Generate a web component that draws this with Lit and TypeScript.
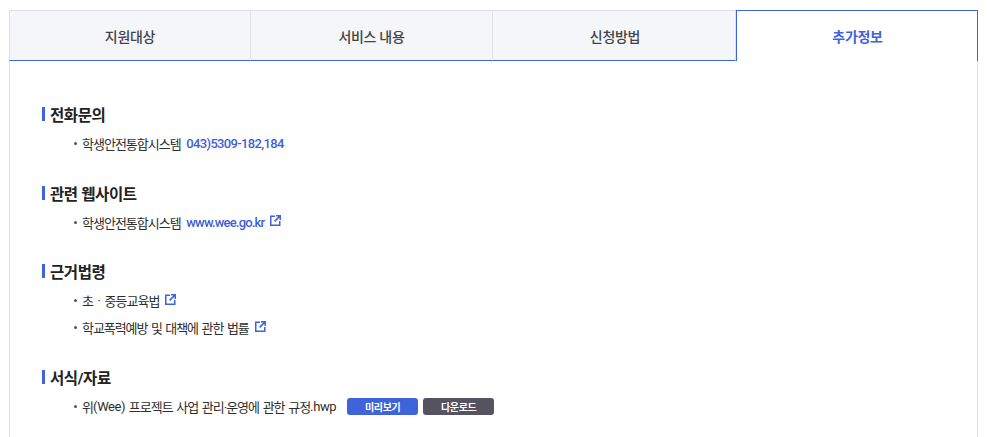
import { LitElement, html, css } from "lit";
import { customElement } from "lit/decorators.js";

const ext = html`<svg class="ext" width="11" height="11" viewBox="0 0 11 11" fill="none" aria-hidden="true">
  <path d="M5 1.25H.75V10.25H9.75V6" stroke="#3f63d9" stroke-width="1.5"/>
  <path d="M4.6 6.4 9.6 1.4M6 .75H10.25V5" stroke="#3f63d9" stroke-width="1.5"/>
</svg>`;

@customElement("app-root")
export class AppRoot extends LitElement {
  static styles = css`
    :host { display: block; height: 437px; overflow: hidden; background: #fff; font-family: Roboto, "Noto Sans CJK KR", sans-serif; color: #333; }
    .wrap { margin: 10px 10px 0 9px; }
    .tabs { display: flex; height: 51px; }
    .tab { box-sizing: border-box; display: flex; align-items: center; justify-content: center; background: #f5f6fa; border: 1px solid #dfe1e6; border-left: 0; border-bottom: 1px solid #3f63e0; font-size: 14px; font-weight: 500; color: #444; letter-spacing: -0.3px; }
    .tab:first-child { border-left: 1px solid #dfe1e6; }
    .t1 { width: 242px; } .t2 { width: 242px; } .t3 { width: 243px; padding-left: 2px; }
    .active { width: 242px; padding-left: 1px; background: #fff; border: 1px solid #3f63e0; border-bottom: 0; color: #3f63e0; font-weight: 700; }
    .body { box-sizing: border-box; height: 376px; border-left: 1px solid #e0e0e0; border-right: 1px solid #e0e0e0; padding: 43px 32px 0; }
    h3 { display: flex; align-items: center; gap: 5px; margin: 0 0 6px; height: 20px; font-size: 15.5px; font-weight: 700; color: #222; letter-spacing: -0.4px; }
    h3::before { content: ""; width: 3px; height: 14px; background: #3f63e0; }
    section { margin-bottom: 25.5px; }
    section.legal { margin-bottom: 26px; }
    ul { list-style: none; margin: 0; padding: 0 0 0 32px; }
    li { display: flex; align-items: center; height: 27px; font-size: 13px; letter-spacing: -1px; word-spacing: 1.4px; color: #2e2e2e; white-space: pre; }
    li::before { content: ""; width: 3px; height: 3px; border-radius: 50%; background: #555; margin-right: 5px; }
    a { color: #3f5fd6; font-weight: 500; text-decoration: none; letter-spacing: -0.65px; margin-left: 2px; }
    a.url { letter-spacing: -0.82px; }
    .lat { letter-spacing: -0.4px; }
    .dot { padding: 0 1px; }
    .tight { letter-spacing: -1.07px; }
    .ext { margin-left: 6px; margin-top: -3px; }
    .btn { box-sizing: border-box; width: 71px; height: 17px; display: flex; align-items: center; justify-content: center; border-radius: 3px; color: #fff; font-size: 10px; font-weight: 700; letter-spacing: -0.4px; }
    .b1 { background: #3f63d9; margin-left: 11px; }
    .b2 { background: #54535f; margin-left: 5px; }
  `;

  render() {
    return html`<div class="wrap">
      <div class="tabs">
        <div class="tab t1">지원대상</div>
        <div class="tab t2">서비스 내용</div>
        <div class="tab t3">신청방법</div>
        <div class="tab active">추가정보</div>
      </div>
      <div class="body">
        <section><h3>전화문의</h3><ul><li>학생안전통합시스템 <a>043)5309-182,184</a></li></ul></section>
        <section><h3>관련 웹사이트</h3><ul><li>학생안전통합시스템 <a class="url">www.wee.go.kr</a>${ext}</li></ul></section>
        <section class="legal"><h3>근거법령</h3><ul>
          <li>초 <span class="dot">·</span> 중등교육법${ext}</li>
          <li class="tight">학교폭력예방 및 대책에 관한 법률${ext}</li>
        </ul></section>
        <section><h3>서식/자료</h3><ul><li>위<span class="lat">(Wee)</span> 프로젝트 사업 관리·운영에 관한 규정<span class="lat">.hwp</span><span class="btn b1">미리보기</span><span class="btn b2">다운로드</span></li></ul></section>
      </div>
    </div>`;
  }
}
